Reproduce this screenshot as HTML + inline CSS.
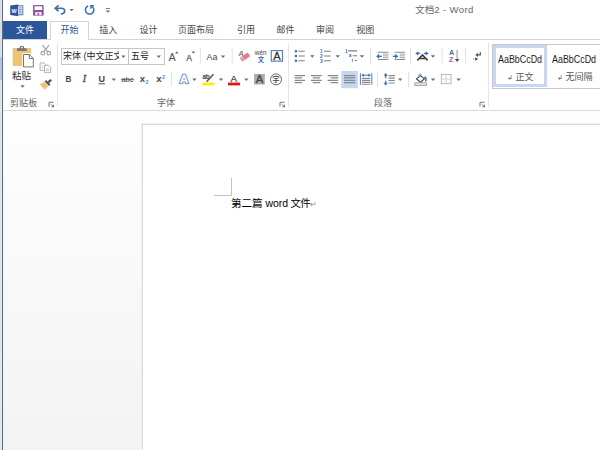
<!DOCTYPE html>
<html lang="zh-CN">
<head>
<meta charset="utf-8">
<title>文档2 - Word</title>
<style>
html,body{margin:0;padding:0;}
body{width:600px;height:450px;overflow:hidden;position:relative;background:#fff;
 font-family:"Liberation Sans","Noto Sans CJK SC",sans-serif;font-size:9px;color:#444;}
.abs{position:absolute;}
#edge{left:0;top:0;width:2px;height:450px;background:linear-gradient(#dedede 0,#dedede 57px,#b4c3e0 57px,#b4c3e0 80px,#e2e2e2 80px,#e6e6e6 100%);}
#edgeb{left:2px;top:0;width:1px;height:450px;background:#4a6fb0;}
#title{left:381.5px;top:4.3px;width:126px;text-align:center;font-size:9.5px;color:#666;line-height:12px;white-space:nowrap;}
#filetab{left:3px;top:21px;width:44px;height:18px;background:#2b579a;color:#fff;text-align:center;line-height:18px;font-size:9px;}
.tab{top:21.4px;height:18px;line-height:18px;font-size:9px;color:#444;white-space:nowrap;}
#tabhome{left:50px;top:21px;width:37px;height:18px;border:1px solid #d4d4d4;border-bottom:none;background:#fff;color:#2b579a;text-align:center;line-height:17px;font-size:9px;}
#ribtop{left:3px;top:39px;width:597px;height:1px;background:#d4d4d4;}
#ribbot{left:3px;top:110px;width:597px;height:1px;background:#dadada;}
.sep{width:1px;background:#e4e4e4;}
.glabel{top:96.6px;font-size:9.1px;color:#666;line-height:12px;white-space:nowrap;}
.combo{top:48px;height:14.5px;border:1px solid #c6c6c6;background:#fff;font-size:9px;line-height:15.4px;color:#222;white-space:nowrap;overflow:hidden;}
.dd{width:0;height:0;border-left:2.5px solid transparent;border-right:2.5px solid transparent;border-top:3px solid #666;}
.sty{font-size:10.4px;line-height:12px;color:#1a1a1a;white-space:nowrap;transform:scaleX(0.856);transform-origin:0 0}
.styn{font-size:9px;line-height:12px;color:#555;white-space:nowrap}
.ret{font-size:7px;color:#666}
#docbg{left:3px;top:111px;width:597px;height:339px;background:linear-gradient(#fefefe,#f3f3f3);}
#page{left:142px;top:124px;width:470px;height:340px;background:#fff;border:1px solid #d9d9d9;box-shadow:-1px -1px 0 #f0f0f0;}
#doctext{left:231px;top:196px;font-size:10.5px;line-height:15px;color:#000;white-space:nowrap;font-family:"Liberation Sans","Noto Sans CJK SC",sans-serif;}
</style>
</head>
<body>
<div class="abs" id="edge"></div>
<div class="abs" id="edgeb"></div>

<!-- title -->
<div class="abs" id="title">文档<span style="letter-spacing:0.42px">2 - Word</span></div>

<!-- tabs -->
<div class="abs" id="filetab">文件</div>
<div class="abs" id="tabhome">开始</div>
<div class="abs tab" style="left:99.3px">插入</div>
<div class="abs tab" style="left:139.5px">设计</div>
<div class="abs tab" style="left:178px">页面布局</div>
<div class="abs tab" style="left:237px">引用</div>
<div class="abs tab" style="left:276.4px">邮件</div>
<div class="abs tab" style="left:316px">审阅</div>
<div class="abs tab" style="left:356.3px">视图</div>
<div class="abs" id="ribtop"></div>
<div class="abs" style="left:51px;top:39px;width:37px;height:1px;background:#fff"></div>

<!-- ribbon -->
<div class="abs glabel" style="left:10px">剪贴板</div>
<div class="abs glabel" style="left:157px">字体</div>
<div class="abs glabel" style="left:374px">段落</div>
<div class="abs sep" style="left:57px;top:43px;height:64px"></div>
<div class="abs sep" style="left:288px;top:43px;height:64px"></div>
<div class="abs sep" style="left:488px;top:43px;height:64px"></div>

<div class="abs" style="left:12px;top:69.7px;font-size:9.5px;color:#303030;line-height:12px">粘贴</div>

<div class="abs combo" style="left:61px;width:66px"><span style="display:inline-block;margin-left:1px;width:56px;overflow:hidden;vertical-align:top">宋体 (中文正文</span></div>
<div class="abs combo" style="left:128px;width:35px"><span style="margin-left:2px">五号</span></div>


<!-- styles gallery -->
<div class="abs" style="left:492px;top:44px;width:120px;height:43px;border:1px solid #c8c8c8;background:#fff"></div>
<div class="abs" style="left:493.3px;top:44.8px;width:48.2px;height:36.7px;border:3px solid #c5d7f5;background:#fff"></div>
<div class="abs sty" style="left:498.3px;top:53.6px">AaBbCcDd</div>
<div class="abs sty" style="left:552.2px;top:53.6px">AaBbCcDd</div>
<div class="abs styn" style="left:507px;top:71px"><span class="ret">↲</span> 正文</div>
<div class="abs styn" style="left:557px;top:71px"><span class="ret">↲</span> 无间隔</div>

<svg class="abs" id="icons" style="left:0;top:0" width="600" height="450" viewBox="0 0 600 450">
<defs>
<path id="dd" d="M-2.2 -1.1 L2.2 -1.1 L0 1.3 Z" fill="#6e6e6e"/>
<g id="launch"><path d="M0 4.5V0H4.5" fill="none" stroke="#777" stroke-width="1"/><path d="M5 2V5H2Z" fill="#777"/><path d="M2 2L4.5 4.5" stroke="#777" stroke-width="1"/></g>
</defs>

<!-- ===== quick access toolbar ===== -->
<g id="qat">
 <!-- word logo -->
 <rect x="17.4" y="5.8" width="5.4" height="9" fill="#fff" stroke="#4f76b3" stroke-width="1"/>
 <path d="M19 7.9H21.6M19 9.6H21.6M19 11.3H21.6M19 13H21.6" stroke="#4f76b3" stroke-width="0.9"/>
 <path d="M10.2 5.6L18.2 4.4V16.2L10.2 15.1Z" fill="#2b579a"/>
 <text x="11.6" y="12.6" font-family="Liberation Sans,sans-serif" font-weight="bold" font-size="5.8" fill="#fff" textLength="5.2" lengthAdjust="spacingAndGlyphs">W</text>
 <!-- save -->
 <rect x="33.1" y="5.1" width="10.5" height="10.5" fill="#8d4ea9"/>
 <rect x="34.5" y="6.3" width="7.7" height="3.7" fill="#fff"/>
 <rect x="35.3" y="12.1" width="6.2" height="2.8" fill="#fff"/>
 <rect x="37.5" y="12.9" width="1.7" height="2" fill="#8d4ea9"/>
 <!-- undo -->
 <path d="M56.5 8.2H61.4C64 8.2 64.7 10 64.7 11C64.7 12.8 63.2 13.7 61.3 14" fill="none" stroke="#3a6fb5" stroke-width="1.6" stroke-linecap="round"/>
 <path d="M58.6 5.4L55.2 8.2L58.6 11" fill="none" stroke="#3a6fb5" stroke-width="1.7" stroke-linejoin="miter"/>
 <use href="#dd" x="71.6" y="10"/>
 <!-- redo -->
 <path d="M88.2 5.9A4.2 4.2 0 1 0 92.8 7.1" fill="none" stroke="#3a6fb5" stroke-width="1.55"/>
 <path d="M90.3 5.1H94.5L90.3 9.5Z" fill="#3a6fb5"/>
 <!-- customize -->
 <path d="M105.7 8.5H110" stroke="#777" stroke-width="0.9"/>
 <path d="M105.6 10.4H110.1L107.85 12.8Z" fill="#707070"/>
</g>

<!-- ===== clipboard group ===== -->
<g id="clip">
 <rect x="12.7" y="48.1" width="18.4" height="17.8" rx="1" fill="#ecc574"/>
 <path d="M17 50.9V48.8Q17 48.3 17.6 48.3H19.7V47Q19.7 45.9 20.8 45.9H23Q24.1 45.9 24.1 47V48.3H26.1Q26.7 48.3 26.7 48.8V50.9Z" fill="#777"/>
 <rect x="21.1" y="46.9" width="1.6" height="1.3" fill="#fff"/>
 <path d="M23.5 54.5H29.3L33.3 58.5V66.9H23.5Z" fill="#fff" stroke="#fff" stroke-width="2.6"/>
 <path d="M23.5 54.5H29.3L33.3 58.5V66.9H23.5Z" fill="#fff" stroke="#666" stroke-width="0.9"/>
 <path d="M29.3 54.5V58.5H33.3" fill="none" stroke="#666" stroke-width="0.9"/>
 <use href="#dd" x="22.6" y="86.4"/>
 <!-- scissors -->
 <g stroke="#a2a2a2" fill="none" stroke-width="1.2">
  <path d="M42.4 45.2L47.8 51.8M49.1 45.2L43.7 51.8"/>
  <circle cx="42.8" cy="53.2" r="1.8"/><circle cx="48.8" cy="53.2" r="1.8"/>
 </g>
 <!-- copy -->
 <g stroke="#b7b0bb" fill="#fff" stroke-width="1">
  <path d="M40.1 62.9H44L46 64.9V70.3H40.1Z"/>
  <path d="M44.5 65.3H48.6L50.7 67.4V72.6H44.5Z"/>
  <path d="M46 68.8H49.2M46 70.6H49.2M41.6 66H43.4M41.6 67.8H43.4" stroke-width="0.8"/>
 </g>
 <!-- format painter -->
 <path d="M39.8 84.2L44.4 81.8L48.4 86L44.8 90Z" fill="#ecc574"/>
 <path d="M45.4 80.8L49.8 85.2" stroke="#555" stroke-width="2"/>
 <path d="M48.2 82.4L51.2 79.9" stroke="#555" stroke-width="2.4"/>
 <use href="#launch" x="49" y="102.3"/>
</g>

<!-- ===== font group ===== -->
<g id="font">
 <use href="#dd" x="123.4" y="56.6"/>
 <use href="#dd" x="158.8" y="56.6"/>
 <!-- grow / shrink -->
 <text x="168.8" y="60.7" font-family="Liberation Sans,sans-serif" font-size="10.2" fill="#555" stroke="#555" stroke-width="0.15">A</text>
 <path d="M175 53.6H178.6L176.8 51.2Z" fill="#3a6fb5"/>
 <text x="186.2" y="60.7" font-family="Liberation Sans,sans-serif" font-size="8.6" fill="#555" stroke="#555" stroke-width="0.25">A</text>
 <path d="M191.6 51.4H195.2L193.4 53.8Z" fill="#3a6fb5"/>
 <path d="M200.4 48V63.6M232.2 48V63.6" stroke="#e1e1e1" stroke-width="1"/>
 <text x="206.5" y="59.5" font-family="Liberation Sans,sans-serif" font-size="9.9" fill="#4a4a4a" textLength="10.9" lengthAdjust="spacingAndGlyphs">Aa</text>
 <use href="#dd" x="223" y="56.6"/>
 <!-- clear formatting -->
 <text x="238.6" y="56.4" font-family="Liberation Sans,sans-serif" font-style="italic" font-size="7.6" fill="#555">A</text>
 <g transform="translate(245,57) rotate(-36)"><rect x="-4.7" y="-2.3" width="9.4" height="4.6" rx="0.9" fill="#e8788a"/><rect x="-3" y="-2.3" width="0.8" height="4.6" fill="#fff"/></g>
 <!-- phonetic guide -->
 <text x="254.8" y="55" font-family="Liberation Sans,sans-serif" font-size="6.4" fill="#444" textLength="11.8" lengthAdjust="spacingAndGlyphs">wén</text>
 <text x="257.7" y="61.8" font-family="Noto Sans CJK SC,sans-serif" font-weight="bold" font-size="6.3" fill="#2f66b3">文</text>
 <!-- char border -->
 <rect x="271.3" y="50.6" width="11.2" height="10.6" fill="#fff" stroke="#5585c8" stroke-width="1.2"/>
 <text x="273.2" y="59.9" font-family="Liberation Sans,sans-serif" font-size="11" fill="#333" stroke="#333" stroke-width="0.3">A</text>

 <!-- row 2 -->
 <text x="65.5" y="82.3" font-family="Liberation Sans,sans-serif" font-weight="bold" font-size="9.8" fill="#484848" textLength="5.9" lengthAdjust="spacingAndGlyphs">B</text>
 <text x="82.8" y="82.4" font-family="Liberation Serif,serif" font-style="italic" font-size="10" fill="#444" stroke="#444" stroke-width="0.3">I</text>
 <text x="98.6" y="82" font-family="Liberation Sans,sans-serif" font-weight="bold" font-size="9" fill="#444">U</text>
 <path d="M98.4 83.8H105" stroke="#444" stroke-width="0.9"/>
 <use href="#dd" x="113.8" y="79.6"/>
 <text x="121.4" y="82.1" font-family="Liberation Sans,sans-serif" font-size="7.6" fill="#444" textLength="12" lengthAdjust="spacingAndGlyphs">abc</text>
 <path d="M120.8 79.7H134" stroke="#444" stroke-width="0.8"/>
 <text x="139.8" y="82.2" font-family="Liberation Sans,sans-serif" font-weight="bold" font-size="9.6" fill="#444">x</text>
 <text x="145.7" y="84.3" font-family="Liberation Sans,sans-serif" font-weight="bold" font-size="4.6" fill="#2f7fd8">2</text>
 <text x="156.3" y="82.2" font-family="Liberation Sans,sans-serif" font-weight="bold" font-size="9.6" fill="#444">x</text>
 <text x="162.3" y="78.5" font-family="Liberation Sans,sans-serif" font-weight="bold" font-size="4.6" fill="#2f7fd8">2</text>
 <path d="M171.4 72.4V86.4" stroke="#e1e1e1" stroke-width="1"/>
 <!-- text effects -->
 <g font-family="Liberation Sans,sans-serif" font-weight="bold" font-size="11.6" stroke-linejoin="round">
 <text x="179.7" y="83.2" fill="#dfe9f8" stroke="#dfe9f8" stroke-width="3.4">A</text>
 <text x="179.7" y="83.2" fill="#4a80c8" stroke="#4a80c8" stroke-width="1.9">A</text>
 <text x="179.7" y="83.2" fill="#fff" stroke="#fff" stroke-width="0.3">A</text>
 </g>
 <use href="#dd" x="194.4" y="79.6"/>
 <!-- highlight -->
 <text x="202.4" y="78.8" font-family="Liberation Sans,sans-serif" font-size="6.4" fill="#333" stroke="#333" stroke-width="0.2">ab</text>
 <path d="M206.6 81.8L213.4 74.2" stroke="#555" stroke-width="1.5"/>
 <rect x="202.4" y="82.6" width="12" height="2.8" fill="#ffee00"/>
 <use href="#dd" x="221" y="79.6"/>
 <!-- font color -->
 <text x="230.6" y="82" font-family="Liberation Sans,sans-serif" font-size="9.8" fill="#444" stroke="#444" stroke-width="0.25">A</text>
 <rect x="228" y="82.6" width="12" height="2.8" fill="#e8141c"/>
 <use href="#dd" x="246.4" y="79.6"/>
 <!-- char shading -->
 <rect x="254.1" y="74" width="10.7" height="10.5" fill="#ababab"/>
 <text x="255.8" y="83.2" font-family="Liberation Sans,sans-serif" font-size="11.3" fill="#444" stroke="#444" stroke-width="0.3">A</text>
 <!-- enclosed char -->
 <circle cx="276" cy="79.4" r="5.5" fill="#fff" stroke="#555" stroke-width="0.9"/>
 <text x="272.3" y="82.4" font-family="Noto Sans CJK SC,sans-serif" font-weight="500" font-size="7.4" fill="#3c3c3c">字</text>
 <use href="#launch" x="280" y="102.3"/>
</g>

<!-- ===== paragraph group ===== -->
<g id="para">
 <!-- bullets -->
 <g fill="#3a6fb5"><rect x="294.8" y="50.1" width="2.2" height="2.2"/><rect x="294.8" y="54.9" width="2.2" height="2.2"/><rect x="294.8" y="59.7" width="2.2" height="2.2"/></g>
 <path d="M298.5 51.2H304.8M298.5 56H304.8M298.5 60.8H304.8" stroke="#808080" stroke-width="1.1"/>
 <use href="#dd" x="312.3" y="56.4"/>
 <!-- numbering -->
 <g font-family="Liberation Sans,sans-serif" font-weight="bold" font-size="4.8" fill="#3a6fb5"><text x="319.9" y="52.9">1</text><text x="319.9" y="57.7">2</text><text x="319.9" y="62.5">3</text></g>
 <path d="M324 51.2H330.8M324 56H330.8M324 60.8H330.8" stroke="#808080" stroke-width="1.1"/>
 <use href="#dd" x="337.7" y="56.4"/>
 <!-- multilevel -->
 <g font-family="Liberation Sans,sans-serif" font-weight="bold" font-size="4.8" fill="#3a6fb5"><text x="345.1" y="53">1</text><text x="348.8" y="57.2">a</text><text x="351.8" y="62.2">i</text></g>
 <path d="M348.2 50.9H357.1M352.8 55.7H357.1M355 60.5H357.1" stroke="#808080" stroke-width="1.1"/>
 <use href="#dd" x="362" y="56.4"/>
 <path d="M370.6 48V63.6M410.5 48V63.6M442 48V63.6M465.6 48V63.6" stroke="#e1e1e1" stroke-width="1"/>
 <!-- outdent -->
 <path d="M377.8 52.3H388.4M377.8 59.5H388.4" stroke="#8a8a8a" stroke-width="1.1"/><path d="M383 54.1H388.4M383 55.9H388.4M383 57.7H388.4" stroke="#a5a5a5" stroke-width="1"/>
 <path d="M376.2 56.3L379.2 53.7V58.9Z" fill="#3a6fb5"/><path d="M378.4 56.3H381.8" stroke="#3a6fb5" stroke-width="1.4"/>
 <!-- indent -->
 <path d="M394.6 52.3H405.1M394.6 59.5H405.1" stroke="#8a8a8a" stroke-width="1.1"/><path d="M399.6 54.1H405.1M399.6 55.9H405.1M399.6 57.7H405.1" stroke="#a5a5a5" stroke-width="1"/>
 <path d="M398.2 56.3L395.2 53.7V58.9Z" fill="#3a6fb5"/><path d="M392.8 56.3H396.2" stroke="#3a6fb5" stroke-width="1.4"/>
 <!-- asian layout -->
 <path d="M417.4 60.3L422.5 54.9L427.6 60.3M419.4 58.5H425.6" fill="none" stroke="#404040" stroke-width="1.7"/>
 <path d="M415.3 53.4L418.3 51.2V55.6Z" fill="#3a6fb5"/><path d="M428.7 53.4L425.7 51.2V55.6Z" fill="#3a6fb5"/>
 <path d="M417.6 53.4H420M424 53.4H426.4" stroke="#3a6fb5" stroke-width="1.3"/>
 <use href="#dd" x="433" y="56.4"/>
 <!-- sort -->
 <text x="449" y="55.3" font-family="Liberation Sans,sans-serif" font-weight="bold" font-size="7.1" fill="#3a6fb5">A</text>
 <text x="449" y="61.8" font-family="Liberation Sans,sans-serif" font-weight="bold" font-size="7.1" fill="#9a5bb3">Z</text>
 <path d="M457.1 50V60" stroke="#9c9c9c" stroke-width="1.1"/><path d="M454.7 58.9H459.5L457.1 62Z" fill="#505050"/>
 <!-- show marks -->
 <path d="M480.3 52V54.9H477.4" fill="none" stroke="#585858" stroke-width="1.2"/><path d="M475.3 54.9L478 52.7V57.1Z" fill="#585858"/>
 <path d="M473.3 59H475.6" stroke="#5a6270" stroke-width="1" stroke-dasharray="0.9 0.5"/><path d="M478 59L475.4 56.9V61.1Z" fill="#4a4f58"/>

 <!-- row 2 -->
 <path d="M294.6 75.6H305M294.6 77.9H302M294.6 80.3H305M294.6 82.7H302" stroke="#8a8a8a" stroke-width="1.2"/>
 <path d="M311 75.6H321.8M312.8 77.9H320M311 80.3H321.8M312.8 82.7H320" stroke="#8a8a8a" stroke-width="1.2"/>
 <path d="M327.6 75.6H338.2M330.6 77.9H338.2M327.6 80.3H338.2M330.6 82.7H338.2" stroke="#8a8a8a" stroke-width="1.2"/>
 <rect x="341.3" y="71" width="16.5" height="17.2" fill="#c3d6f3"/>
 <path d="M344 75.6H355.2M344 77.9H355.2M344 80.3H355.2M344 82.7H355.2" stroke="#8a8a8a" stroke-width="1.2"/>
 <!-- distribute -->
 <path d="M360.4 73.2V84.8M371.8 73.2V84.8" stroke="#4a7ac0" stroke-width="1"/>
 <path d="M362.4 75.2H369.8" stroke="#3a6fb5" stroke-width="1"/><path d="M361.4 75.2L363.8 73.4V77Z M370.8 75.2L368.4 73.4V77Z" fill="#3a6fb5"/>
 <path d="M362 78.4H370.2M362 80.4H370.2M362 82.4H370.2M362 84.3H370.2" stroke="#8a8a8a" stroke-width="1.1"/>
 <path d="M377.6 71.6V87M408.6 71.6V87" stroke="#e1e1e1" stroke-width="1"/>
 <!-- line spacing -->
 <path d="M385.7 74.4V78.2M385.7 80.8V84.4" stroke="#3a6fb5" stroke-width="1.2"/><path d="M383.6 75.8L385.7 73.1L387.8 75.8Z M383.6 82.8L385.7 85.4L387.8 82.8Z" fill="#3a6fb5"/>
 <path d="M388.6 75.6H394.8M388.6 78.1H394.8M388.6 80.5H394.8M388.6 83H394.8" stroke="#8a8a8a" stroke-width="1.1"/>
 <use href="#dd" x="400.2" y="79.6"/>
 <!-- shading -->
 <path d="M416.5 78.9L420.3 75.6L424.5 78.7L420.6 82.2Z" fill="#fff" stroke="#484848" stroke-width="1.1"/>
 <path d="M419 76.4V74.6Q420 72.9 421.2 74.5V75.9" fill="none" stroke="#8a8a8a" stroke-width="0.9"/>
 <path d="M424.7 76.7Q427 78.9 425.5 81.3" fill="none" stroke="#3b7fd4" stroke-width="1.6"/>
 <rect x="414.8" y="82.8" width="11.8" height="2.7" fill="#e2e2e2" stroke="#8a8a8a" stroke-width="0.7"/>
 <use href="#dd" x="433" y="79.6"/>
 <!-- borders -->
 <rect x="441.3" y="74.4" width="9.7" height="9.3" fill="none" stroke="#a6a6a6" stroke-width="0.8"/>
 <path d="M446.1 74.4V83.7M441.3 79H451" stroke="#cacaca" stroke-width="0.9"/>
 <use href="#dd" x="458.6" y="79.6"/>
 <use href="#launch" x="480" y="102.3"/>
</g>
</svg>

<div class="abs" id="ribbot"></div>

<!-- document -->
<div class="abs" id="docbg"></div>
<div class="abs" id="page"></div>
<div class="abs" style="left:231px;top:178px;width:1px;height:18px;background:#c2c2c2"></div>
<div class="abs" style="left:214px;top:195px;width:18px;height:1px;background:#c2c2c2"></div>
<div class="abs" id="doctext">第二篇 word <span style="letter-spacing:-0.8px;margin-left:-0.6px">文件</span><span style="color:#888;font-size:8px;margin-left:0.5px">↵</span></div>
</body>
</html>
